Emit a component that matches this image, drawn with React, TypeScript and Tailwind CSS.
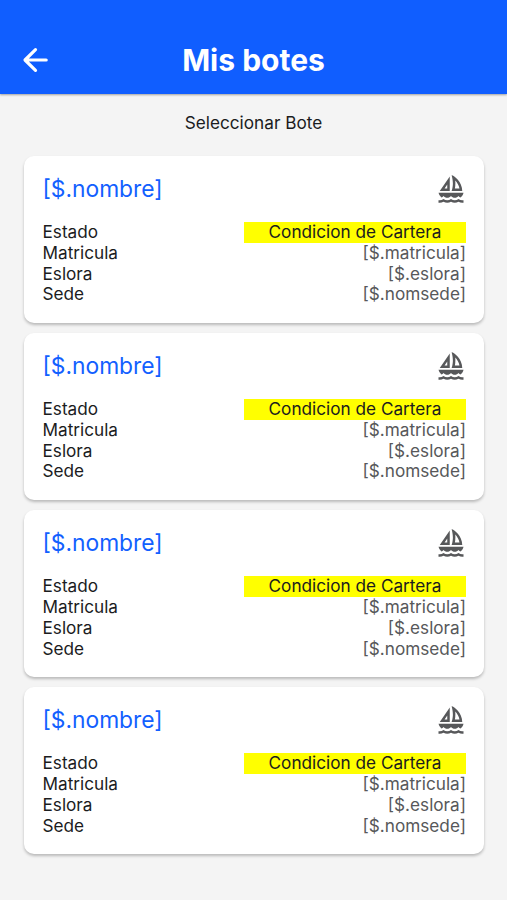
import React from "react";
import { MdOutlineSailing } from "react-icons/md";

const rows = [
  { label: "Matricula", value: "[$.matricula]" },
  { label: "Eslora", value: "[$.eslora]" },
  { label: "Sede", value: "[$.nomsede]" },
];

function BoatCard() {
  return (
    <article className="h-[167px] rounded-[10px] bg-white pl-[18.5px] pr-[18px] pt-[17px] shadow-[0_2px_3px_rgba(0,0,0,0.24)]">
      <div className="flex h-8 items-center justify-between">
        <h2 className="text-[22.8px] leading-8 text-[#1260ff]">[$.nombre]</h2>
        <MdOutlineSailing className="size-[30px] text-[#57585a]" />
      </div>
      <dl className="mt-[17px] text-[17.2px] leading-[20.8px]">
        <div className="flex justify-between">
          <dt>Estado</dt>
          <dd className="w-[222px] bg-[#ffff00] text-center">Condicion de Cartera</dd>
        </div>
        {rows.map((row) => (
          <div key={row.label} className="flex justify-between">
            <dt>{row.label}</dt>
            <dd className="text-[#57585a]">{row.value}</dd>
          </div>
        ))}
      </dl>
    </article>
  );
}

export default function App() {
  return (
    <div className="h-[900px] w-[507px] overflow-hidden bg-[#f4f4f4] font-['Inter',sans-serif] text-[#1b1c1e]">
      <header className="grid h-[94px] grid-cols-[70px_1fr_70px] pt-[43px] bg-[#105eff] text-white shadow-[0_1px_2px_rgba(0,0,0,0.35)]">
        <button className="flex h-[34px] items-center pl-[22px]" aria-label="Volver">
          <svg viewBox="0 0 26 26" className="size-[26px]" fill="none" stroke="currentColor" strokeWidth="3.2" strokeLinecap="round" strokeLinejoin="round">
            <path d="M13.5 2.7 3 13l10.5 10.3M3.2 13H24.2" />
          </svg>
        </button>
        <h1 className="text-center text-[30px] font-bold leading-[34px]">Mis botes</h1>
      </header>
      <p className="mt-[17px] text-center text-[17.2px] leading-6">Seleccionar Bote</p>
      <main className="mt-[21px] flex flex-col gap-[10.1px] pl-6 pr-[23px]">
        {[0, 1, 2, 3].map((id) => (
          <BoatCard key={id} />
        ))}
      </main>
    </div>
  );
}
